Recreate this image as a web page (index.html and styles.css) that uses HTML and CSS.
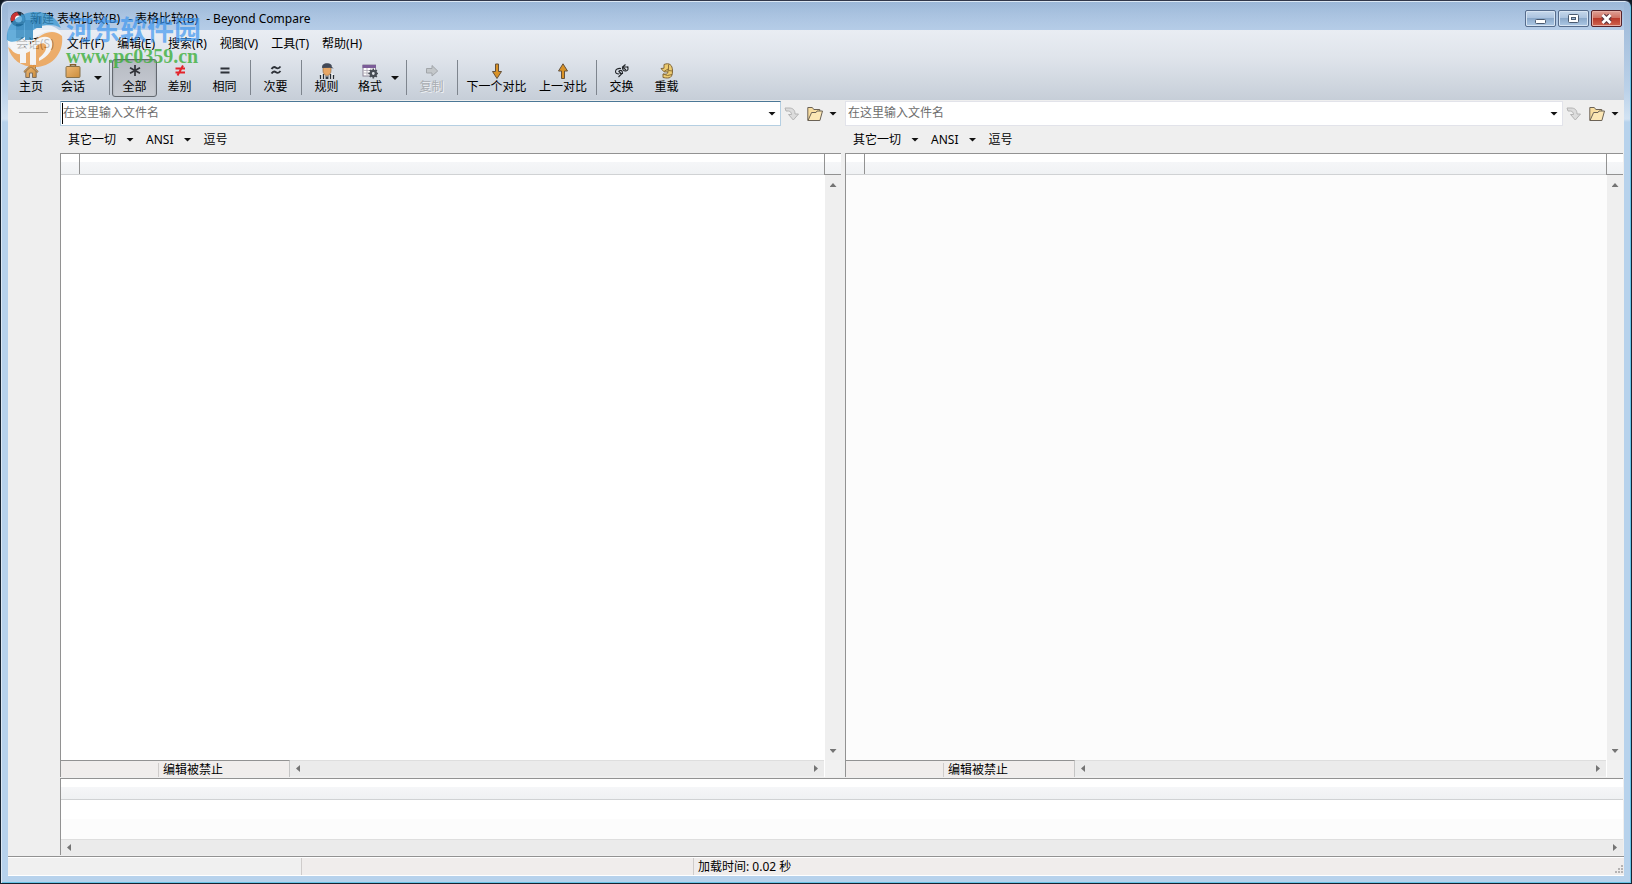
FILE: index.html
```html
<!DOCTYPE html>
<html lang="zh-CN">
<head>
<meta charset="utf-8">
<title>新建 表格比较(B) - 表格比较(B) - Beyond Compare</title>
<link rel="stylesheet" href="styles.css">
</head>
<body>
<svg class="defs" aria-hidden="true">
  <defs>
    <linearGradient id="gold" x1="0" y1="0" x2="1" y2="1"><stop offset="0" stop-color="#eeb976"/><stop offset="1" stop-color="#cb8d3c"/></linearGradient>
    <symbol id="open" viewBox="0 0 16 16"><path d="M.8 14.500V1.500h4.500l1.500 2h6v3" fill="#f8dda0" stroke="#6b6255"/><path d="M1 14.500 4.600 6.500H9l1-1.500h5.500l-2.600 9.500z" fill="#fbe6b4" stroke="#6b6255"/></symbol>
    <symbol id="go" viewBox="0 0 16 16"><path d="M1 2h4c4 0 6 2 6 6h3.500L9.300 14 4.500 8.500h3c0-2-1-3-3-3.500L2 5z" fill="#dcdcdc" stroke="#b4b4b4"/></symbol>
  </defs>
</svg>
<div class="window">
  <header class="titlebar">
    <svg class="app-icon" viewBox="0 0 16 16"><circle cx="8" cy="8" r="7.500" fill="#24313f"/><path d="M1 10A7 7 0 0 1 7 1l2 3-5 6z" fill="#c93434"/><path d="M11 2a7 7 0 0 1 3 9l-3-2z" fill="#4e7897"/><circle cx="8.500" cy="8" r="3.500" fill="#fff"/></svg>
    <h1 class="title"><span>新建 表格比较(B)</span> <span>- 表格比较(B)</span> <span>- Beyond Compare</span></h1>
    <div class="window-buttons">
      <button class="winbtn" aria-label="最小化"><svg viewBox="0 0 28 14"><rect x="9.500" y="7.500" width="10" height="4" rx="1" fill="#fff" stroke="#4a5a70"/></svg></button>
      <button class="winbtn" aria-label="最大化"><svg viewBox="0 0 28 14"><rect x="9.500" y="2.500" width="10" height="8" rx="1" fill="#fff" stroke="#4a5a70"/><rect x="12.500" y="5.500" width="4" height="2" fill="#9db7d3" stroke="#4a5a70"/></svg></button>
      <button class="winbtn winbtn-close" aria-label="关闭"><svg viewBox="0 0 28 14"><path d="m11 3.500 7 7m0-7-7 7" stroke="#5b3640" stroke-width="5"/><path d="m10.500 3 8 8m0-8-8 8" stroke="#fff" stroke-width="2.800"/></svg></button>
    </div>
  </header>
  <main class="client">
    <div class="bars">
      <nav class="menu">
        <button>会话(S)</button><button>文件(F)</button><button>编辑(E)</button><button>搜索(R)</button><button>视图(V)</button><button>工具(T)</button><button>帮助(H)</button>
      </nav>
      <div class="toolbar">
        <button class="tool home"><svg viewBox="0 0 16 16"><path d="M2.800 8v6.500h3.700V10h3v4.500h3.700V8L8 3z" fill="url(#gold)" stroke="#7e6e5d"/><path d="M.8 8.500 8 1.500l2.500 2.300V2h2v3.700l2.700 2.800-1 .9L8 3.700 1.800 9.400z" fill="#dfa55d" stroke="#86673f" stroke-width=".8"/></svg>主页</button>
        <button class="tool split"><svg viewBox="0 0 16 16"><path d="M5.500 4V1.700h5V4" fill="none" stroke="#85602e" stroke-width="1.500"/><rect x="1" y="3.500" width="14" height="11" rx="1" fill="url(#gold)" stroke="#86704b"/></svg>会话</button><button class="drop" aria-label="会话列表"><i class="caret"></i></button>
        <span class="sep"></span>
        <button class="tool pressed"><svg viewBox="0 0 16 16"><path d="M8 2v11M3 4.800l10 5.500M3 10.300l10-5.500" stroke="#303238" stroke-width="1.700"/></svg>全部</button>
        <button class="tool"><svg viewBox="0 0 16 16"><path d="M3.500 5.500h9.500M3.500 9.500h9.500M11 2.500l-5.500 10" stroke="#e3242b" stroke-width="2" fill="none"/></svg>差别</button>
        <button class="tool"><svg viewBox="0 0 16 16"><path d="M3.500 5.500h9M3.500 9.500h9" stroke="#2d3138" stroke-width="2"/></svg>相同</button>
        <span class="sep"></span>
        <button class="tool"><svg viewBox="0 0 16 16"><path d="M3.500 6c2-3 3.500-2 4.500-1.200s2.500 1 4.500-1.300M3.500 10.500c2-3 3.500-2 4.500-1.200s2.500 1 4.500-1.300" stroke="#2d3138" stroke-width="1.900" fill="none"/></svg>次要</button>
        <span class="sep"></span>
        <button class="tool"><svg viewBox="0 0 16 16"><path d="M0 16c0-4 2-5.500 4.500-5.500h7c2.500 0 4.500 1.500 4.500 5.500z" fill="#f7f8f9"/><path d="M1.500 16v-4M4.500 16v-5M11.500 16v-5M14.500 16v-4" stroke="#252c35" stroke-width="1.400"/><path d="m6.500 12 1.500 2 1.500-2v4h-3z" fill="#353c48"/><path d="M4 4.500h8V8c0 2.500-2 4.500-4 4.500S4 10.500 4 8z" fill="#e8a766" stroke="#896138" stroke-width=".6"/><path d="M3.200 5C2.500 1.700 5 .2 8 .2s5.200 1.100 4.800 3.800l2 1.500-4-.7z" fill="#424957"/></svg>规则</button>
        <button class="tool split"><svg viewBox="0 0 16 16"><rect x="1" y="2" width="12.500" height="11" fill="#fff" stroke="#8b8496"/><path d="M.5 3.500h13.500" stroke="#7b5c98" stroke-width="3"/><path d="M1.500 7.500h12M1.500 10h12M5 5v7.500M9 5v7.500" stroke="#aaa6b1" stroke-width=".8"/><circle cx="11.300" cy="10.500" r="2.600" fill="#dfe3e9" stroke="#474d55" stroke-width="2.400"/><path d="M11.300 5.500v2m0 6v2m-5-5h2m6 0h2m-8.500-3.500 1.400 1.400m4.200 4.200 1.400 1.400m0-7-1.400 1.400m-4.200 4.200-1.400 1.400" stroke="#474d55" stroke-width="1.700"/></svg>格式</button><button class="drop" aria-label="格式列表"><i class="caret"></i></button>
        <span class="sep"></span>
        <button class="tool" disabled><svg viewBox="0 0 16 16"><path d="M2.500 5.500h5.500v-3l5.700 5.500L8 13v-3H2.500z" fill="#c3c7ca" stroke="#a1a5a9"/></svg>复制</button>
        <span class="sep"></span>
        <button class="tool next"><svg viewBox="0 0 16 16"><path d="M6.500 1h3v7.500h3L8 15.500l-4.500-7h3z" fill="#d99226" stroke="#65513a"/></svg>下一个对比</button>
        <button class="tool prev"><svg viewBox="0 0 16 16"><path d="M6.500 15.500h3V8h3L8 .8 3.500 8h3z" fill="#d99226" stroke="#65513a"/></svg>上一对比</button>
        <span class="sep"></span>
        <button class="tool"><svg viewBox="0 0 16 16"><path d="M7 5.500c-3-.5-5.500 1-5.500 3 0 1.500 1.500 2.500 3.500 2.500M4.500 8 7.500 11l-3 3M5 8c2.500-1.500 3.500 0 3.500 2.500H5.500M9 3.500c-1.500 2 .5 5 3 4.500 2-.5 3-2.500 1-4.500M11.500 1.500 8.500 4l3.500 3M9.500 4h5" stroke="#222529" stroke-width="1.100" fill="none"/></svg>交换</button>
        <button class="tool"><svg viewBox="0 0 16 16"><path d="M5 1.500c5-2 8.500 0 8.500 6.500S11 16 4 14.500V11c3.500.5 4.500 0 5-2L5 8.800 2 5.500l3-.3z" fill="#eccb70" stroke="#80663a"/><path d="M9 9V6L5 8.500M9.500 1.500v6l4 .5M4 11l4.500 1.500 4.500-1" fill="none" stroke="#8e7038"/></svg>重载</button>
      </div>
    </div>
    <div class="workspace">
      <aside class="gutter"><hr></aside>
      <div class="content">
        <div class="panes">
          <section class="pane active">
            <div class="path-row">
              <div class="combo"><input type="text" aria-label="左侧文件名" placeholder="在这里输入文件名"><button class="combo-drop" aria-label="历史"><i class="caret"></i></button></div>
              <button class="mini" aria-label="加载" disabled><svg viewBox="0 0 16 16"><use href="#go"/></svg></button>
              <button class="mini folder" aria-label="打开文件"><svg viewBox="0 0 16 16"><use href="#open"/></svg><i class="caret"></i></button>
            </div>
            <div class="format-row"><button>其它一切<i class="caret"></i></button><button>ANSI<i class="caret"></i></button><span>逗号</span></div>
            <div class="grid">
              <div class="grid-head"><span class="row-head"></span><span class="head-fill"></span><span class="head-end"></span></div>
              <div class="grid-body"><div class="sheet"></div><div class="vscroll"><i class="up"></i><i class="down"></i></div></div>
              <div class="grid-foot"><div class="edit-state"><span></span><span>编辑被禁止</span></div><div class="hscroll"><i class="left"></i><i class="right"></i></div><span class="corner"></span></div>
            </div>
          </section>
          <section class="pane">
            <div class="path-row">
              <div class="combo"><input type="text" aria-label="右侧文件名" placeholder="在这里输入文件名"><button class="combo-drop" aria-label="历史"><i class="caret"></i></button></div>
              <button class="mini" aria-label="加载" disabled><svg viewBox="0 0 16 16"><use href="#go"/></svg></button>
              <button class="mini folder" aria-label="打开文件"><svg viewBox="0 0 16 16"><use href="#open"/></svg><i class="caret"></i></button>
            </div>
            <div class="format-row"><button>其它一切<i class="caret"></i></button><button>ANSI<i class="caret"></i></button><span>逗号</span></div>
            <div class="grid">
              <div class="grid-head"><span class="row-head"></span><span class="head-fill"></span><span class="head-end"></span></div>
              <div class="grid-body"><div class="sheet"></div><div class="vscroll"><i class="up"></i><i class="down"></i></div></div>
              <div class="grid-foot"><div class="edit-state"><span></span><span>编辑被禁止</span></div><div class="hscroll"><i class="left"></i><i class="right"></i></div><span class="corner"></span></div>
            </div>
          </section>
        </div>
        <section class="details"><div class="details-head"></div><div class="details-row"></div><div class="details-row alt"></div><div class="hscroll"><i class="left"></i><i class="right"></i></div></section>
      </div>
    </div>
    <footer class="status"><span class="cell first"></span><span class="cell second"></span><span class="cell last">加载时间: 0.02 秒</span>
      <svg class="grip" viewBox="0 0 10 10"><path d="M7 1h2M4 4h2M7 4h2M1 7h2M4 7h2M7 7h2" stroke="#b5b3b3" stroke-width="2"/></svg></footer>
  </main>
  <div class="watermark">
    <svg viewBox="0 0 58 58">
      <path d="M2 32C0 14 13 2 31 2c12 0 21 6 25 16-7-4-13-4-19 0C27 26 14 36 2 32z" fill="#3b9ad3"/>
      <path d="M2 30c3 14 14 10 22 3 8-8 18-17 33-8l-3-5C43 12 34 15 25 23S7 34 2 30z" fill="#fafafa"/>
      <path d="M11 14h8v14h-8zM20 10h8v20h-8zM29 7h8v11h-8z" fill="#1f7fba"/>
      <path d="M3 37c8 8 17 3 25-5 9-9 20-14 29-6 2 17-10 31-27 31C17 57 6 50 3 37z" fill="#f09a3f"/>
      <path d="M6 33c8 8 18 3 25-3 7-5 14-4 16 1 2 8-4 16-13 20v-3c6-5 8-9 7-13-3-4-9 0-13 4-7 6-17 8-22 0z" fill="#fafafa"/>
      <path d="M15 38h6v15h-6zM25 35h6v20h-6z" fill="#fafafa"/>
    </svg>
    <div class="mark-text"><span class="mark-name">河东软件园</span><span class="mark-url">www.pc0359.cn</span></div>
  </div>
</div>
</body>
</html>
```

FILE: styles.css
```css
* { box-sizing: border-box; }
html, body { height: 100%; margin: 0; }
body { background: #101923; color: #000; font: 12px/16px "Noto Sans", "Noto Sans CJK SC", sans-serif; }
button { padding: 0; border: 0; background: none; color: inherit; font: inherit; white-space: nowrap; }
svg { display: block; flex: none; }
.defs { position: absolute; width: 0; height: 0; }

.window { position: relative; display: flex; flex-direction: column; height: 100%; padding: 0 7px 7px; border: 1px solid #172331; border-top-color: #31374a; border-radius: 7px 7px 0 0; background: linear-gradient(#9ab6d7 0, #bcd2e9 90px, #d3e3f3 118px, #b7d2ec 121px); box-shadow: inset 1px 1px #dce8f4, inset -1px -1px #68c3e6; }
.titlebar { display: flex; align-items: center; flex: none; height: 29px; padding: 6px 2px 0 2px; background: linear-gradient(transparent, #b5cce7); }
.app-icon { width: 16px; height: 16px; }
.title { display: flex; flex: 1; gap: 8px; margin: 0 0 0 4px; font-size: 12px; font-weight: 400; white-space: nowrap; }
.window-buttons { display: flex; gap: 2px; }
.winbtn { width: 31px; height: 17px; border: 1px solid #566c8c; border-radius: 2px; background: linear-gradient(#c6d8eb, #aac2de 48%, #8ba9ca 50%, #aec9e5); box-shadow: inset 0 0 0 1px #d7e4f2; }
.winbtn svg { width: 28px; height: 14px; }
.winbtn-close { border-color: #55222a; background: linear-gradient(#dfa197, #cf6e5f 48%, #b93a2b 50%, #cf6550); box-shadow: inset 0 0 0 1px #e7aea4; }

.client { display: flex; flex: 1; flex-direction: column; min-height: 0; background: #efefef; }
.bars { flex: none; height: 70px; background: linear-gradient(#e9edf3, #dfe4eb 40%, #c6ced8); }
.menu { display: flex; gap: 13px; height: 29px; padding: 0 8px 2px; }
.toolbar { display: flex; height: 38px; padding-left: 2px; }
.tool { display: flex; flex-direction: column; align-items: center; width: 45px; padding-top: 3px; border: 1px solid transparent; border-radius: 3px; }
.tool svg { width: 16px; height: 16px; }
.tool:disabled { color: #a9adb2; text-shadow: 1px 1px #eef0f2; }
.home { width: 42px; }
.split { width: 42px; }
.next { width: 73px; }
.prev { width: 60px; }
.drop { display: flex; align-items: center; width: 12px; }
.pressed { border-color: #63686f; background: linear-gradient(#b6bbc3, #c8ccd3); box-shadow: inset 0 1px 2px #92979f; }
.sep { width: 1px; margin: 1px 2px 2px 3px; background: #7e858e; }
.caret { display: block; flex: none; width: 8px; height: 4px; background: #111; clip-path: polygon(0 0, 100% 0, 50% 100%); }

.workspace { display: flex; flex: 1; min-height: 0; }
.gutter { width: 52px; padding: 12px 12px 0 11px; }
.gutter hr { height: 1px; margin: 0; border: 0; background: #a0a0a0; }
.content { display: flex; flex: 1; flex-direction: column; min-width: 0; padding-right: 1px; }
.panes { display: grid; grid-template-columns: 781fr 778fr; gap: 4px; flex: 1; min-height: 0; }
.pane { display: flex; flex-direction: column; min-width: 0; }
.path-row { display: flex; align-items: center; height: 25px; margin-top: 1px; }
.combo { display: flex; flex: 1; align-items: center; height: 25px; border: 1px solid #e2e3ea; background: #fff; }
.active .combo { border-color: #4b7796 #b5cfe2 #b5cfe2; }
.combo input { flex: 1; min-width: 0; height: 21px; padding: 0 2px 2px; border: 0; outline: 0; background: none; font: inherit; }
.active input { border-left: 1px solid #000; margin-left: 1px; padding-left: 0; }
.combo input::placeholder { color: #6d6d6d; opacity: 1; }
.combo-drop { width: 12px; height: 20px; }
.mini { display: flex; align-items: center; margin-left: 3px; }
.mini svg { width: 16px; height: 16px; }
.folder { gap: 6px; margin-left: 7px; padding-right: 4px; }
.format-row { display: flex; align-items: center; height: 27px; padding-left: 8px; }
.format-row button { display: flex; align-items: center; gap: 10px; margin-right: 12px; }

.grid { display: flex; flex: 1; flex-direction: column; min-height: 0; border-top: 1px solid #929292; border-left: 1px solid #929292; }
.grid-head { display: flex; height: 21px; border-bottom: 1px solid #d0d2d4; background: linear-gradient(#fff 0, #fff 40%, #f5f6f8 41%, #f0f2f4); }
.row-head { width: 19px; border-right: 1px solid #929292; }
.head-fill { flex: 1; }
.head-end { width: 17px; height: 21px; border: solid #929292; border-width: 0 0 1px 1px; }
.grid-body { display: flex; flex: 1; min-height: 0; }
.sheet { flex: 1; background: #fcfcfc; }
.active .sheet { background: #fff; }
.vscroll { display: flex; flex-direction: column; align-items: center; justify-content: space-between; width: 16px; padding: 8px 0 7px; background: #efefef; }
.hscroll { display: flex; flex: 1; align-items: center; justify-content: space-between; height: 16px; padding: 0 6px; border-top: 1px solid #dedede; background: #ebebeb; }
.up, .down { width: 7px; height: 4px; background: #747474; }
.up { clip-path: polygon(50% 0, 100% 100%, 0 100%); }
.down { clip-path: polygon(0 0, 100% 0, 50% 100%); }
.left, .right { width: 4px; height: 7px; background: #747474; }
.left { clip-path: polygon(100% 0, 100% 100%, 0 50%); }
.right { clip-path: polygon(0 0, 100% 50%, 0 100%); }
.grid-foot { display: flex; height: 17px; }
.edit-state { display: flex; width: 229px; border: solid #929292; border-width: 1px 0 0; border-right: 1px solid #c5c5c5; background: #f0edec; }
.edit-state span:first-child { width: 98px; margin-top: 2px; border-right: 1px solid #cfcccb; }
.edit-state span + span { padding: 1px 0 0 4px; }
.corner { width: 17px; border-left: 1px solid #fff; background: #f1f1f1; }
.details { flex: none; margin-top: 1px; border-top: 1px solid #929292; border-left: 1px solid #929292; background: #fff; }
.details-head { height: 21px; border-bottom: 1px solid #d0d2d4; background: linear-gradient(#fff 0, #fff 40%, #f5f6f8 41%, #eff1f3); }
.details-row { height: 19px; }
.details-row.alt { height: 20px; background: #fcfcfc; }

.status { display: flex; flex: none; height: 20px; margin-top: 1px; border-top: 1px solid #929292; border-bottom: 1px solid #fff; background: #f0edec; box-shadow: inset 0 1px #fff; }
.cell { margin-top: 1px; border-right: 1px solid #cfcccb; }
.first { width: 294px; background: #f0f0f0; }
.second { width: 392px; }
.last { flex: 1; padding: 1px 0 0 4px; border-right: 0; }
.grip { align-self: flex-end; width: 10px; height: 10px; }

.watermark { position: absolute; top: 9px; left: 4px; display: flex; pointer-events: none; }
.watermark svg { width: 58px; height: 58px; opacity: .75; }
.mark-text { display: flex; flex-direction: column; margin: 3px 0 0 3px; }
.mark-name { color: #3c96f0b0; font: 700 27px/31px "Noto Sans CJK SC", sans-serif; }
.mark-url { color: #3aae38c8; font: 700 20px/24px "Liberation Serif", serif; }
```
